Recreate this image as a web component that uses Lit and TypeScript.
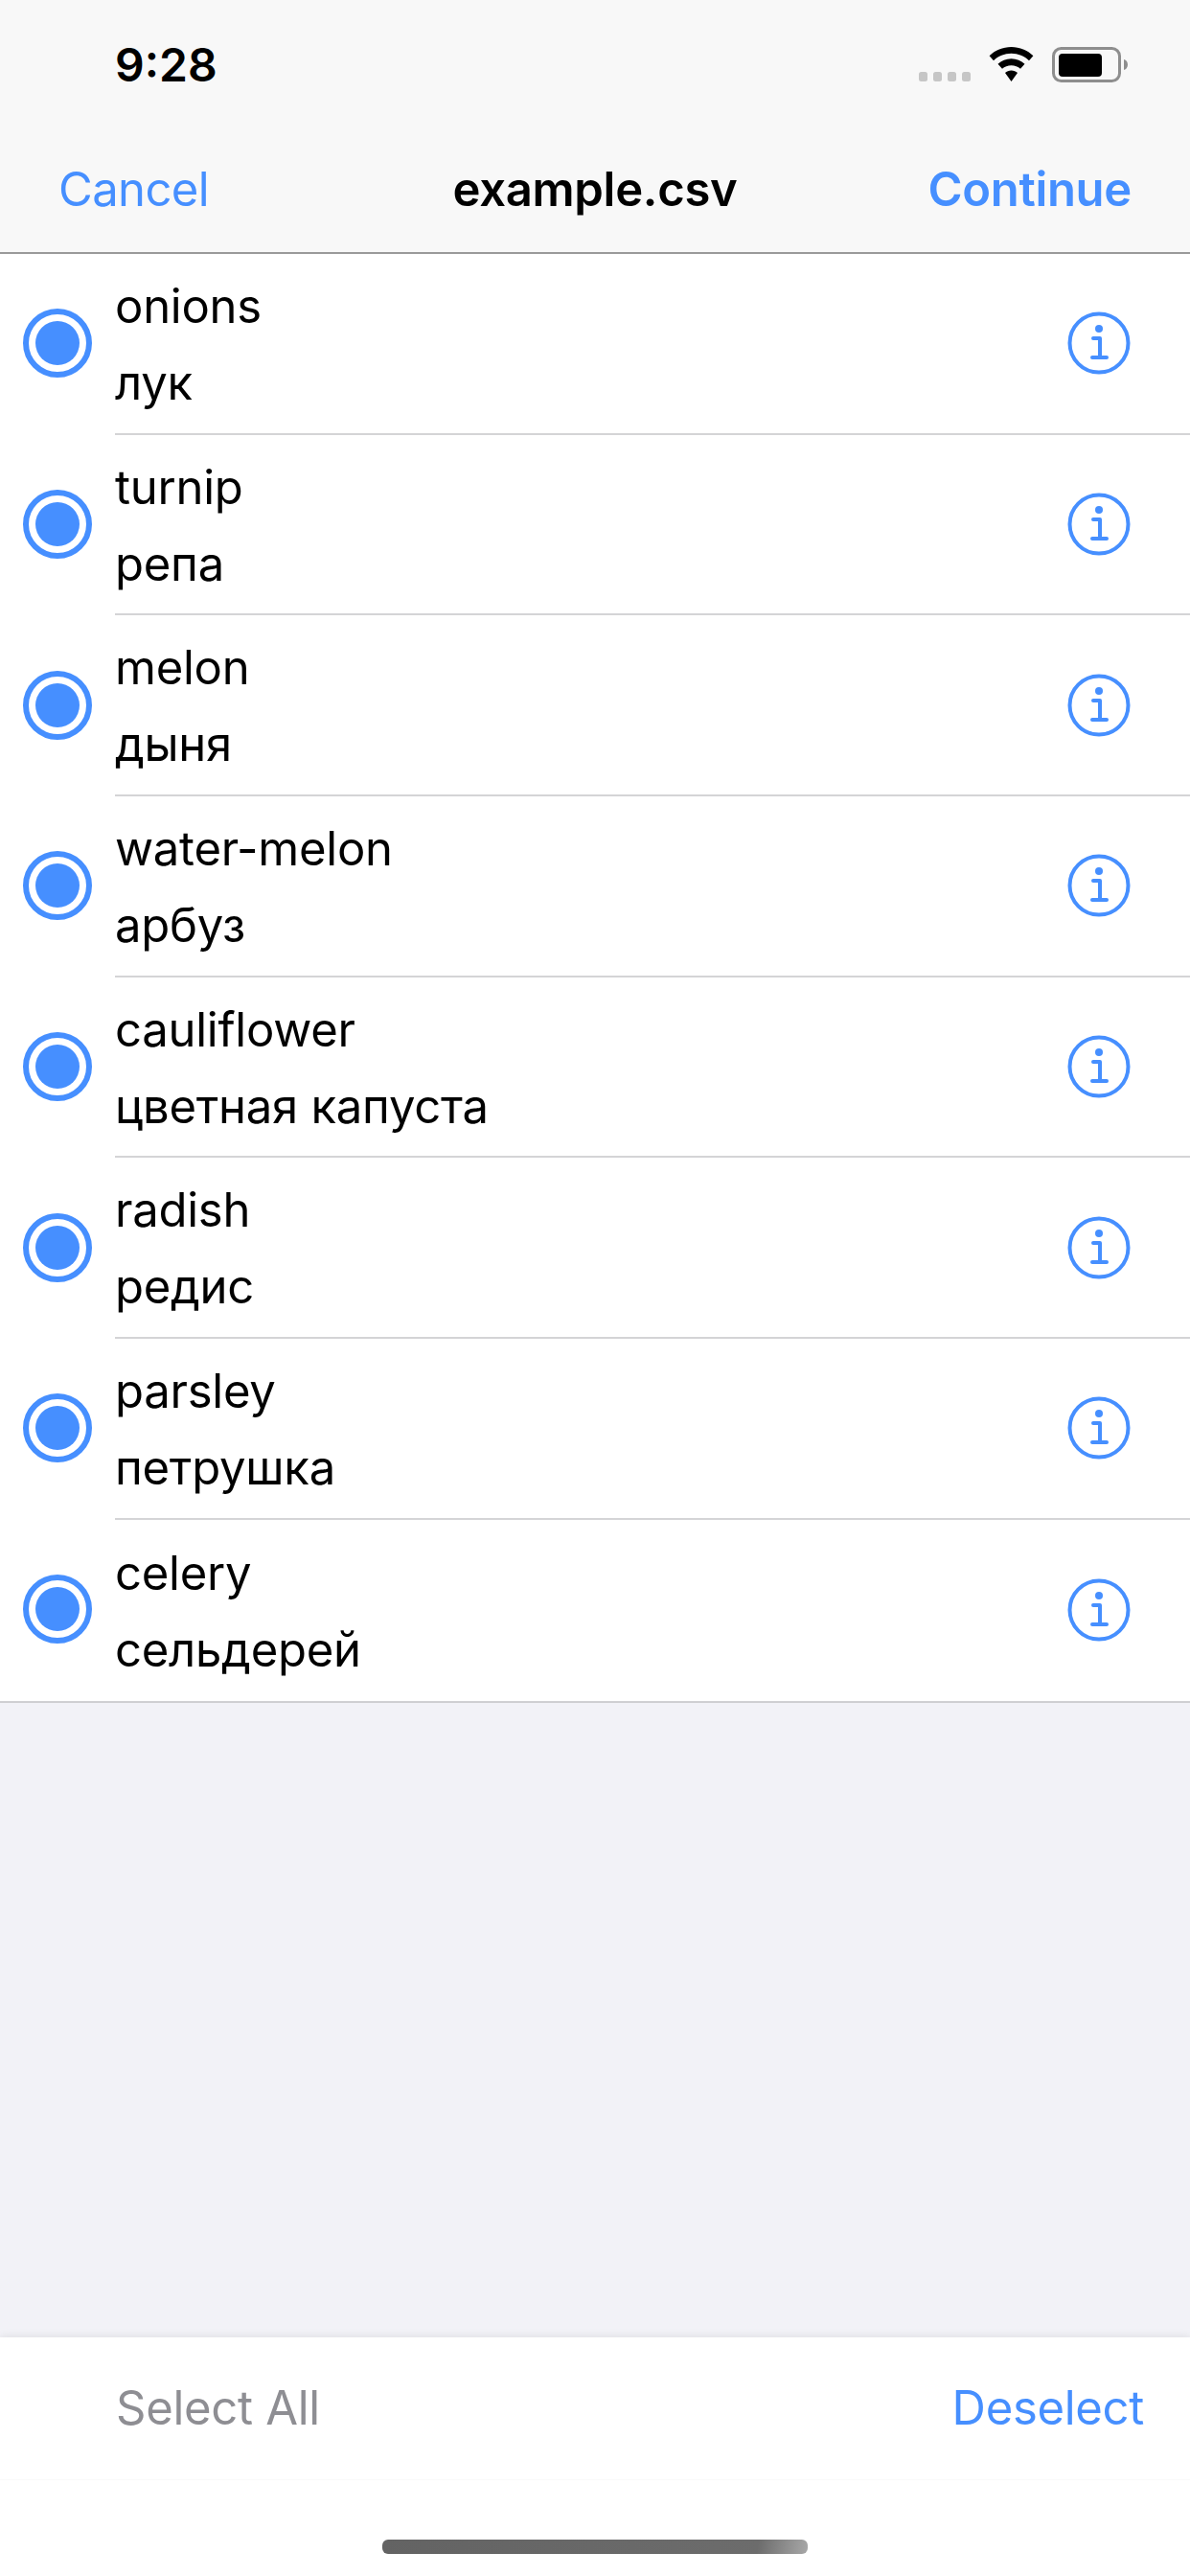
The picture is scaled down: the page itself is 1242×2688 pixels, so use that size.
import { LitElement, html, css, svg } from "lit";
import { customElement } from "lit/decorators.js";

const ITEMS: [string, string][] = [
  ["onions", "лук"],
  ["turnip", "репа"],
  ["melon", "дыня"],
  ["water-melon", "арбуз"],
  ["cauliflower", "цветная капуста"],
  ["radish", "редис"],
  ["parsley", "петрушка"],
  ["celery", "сельдерей"],
];

const wifi = svg`<svg class="wifi" width="47" height="36" viewBox="0 0 47 36">
  <path d="M23.5 0C14.6 0 6.6 3.5.6 9.2l4.4 5C9.8 9.6 16.3 6.8 23.5 6.8s13.7 2.8 18.5 7.4l4.4-5C40.400 3.500 32.400 0 23.500 0z" fill="#000"/>
  <path d="M23.500 12.200c-5.400 0-10.300 2.100-14 5.500l4.500 5.100c2.500-2.200 5.800-3.600 9.500-3.600s7 1.400 9.500 3.600l4.500-5.100c-3.700-3.400-8.600-5.500-14-5.500z" fill="#000"/>
  <path d="M23.500 24.600c-2.500 0-4.800.9-6.500 2.400L23.500 36 30 27c-1.700-1.500-4-2.400-6.500-2.400z" fill="#000"/>
</svg>`;

const battery = svg`<svg width="80" height="38" viewBox="0 0 80 38">
  <rect x="1.500" y="1.500" width="69" height="34" rx="8" fill="none" stroke="#8e8e8e" stroke-width="3"/>
  <rect x="7" y="7" width="45" height="24" rx="4" fill="#000"/>
  <path d="M75 13c2.600.8 4 3 4 5.500S77.600 23.200 75 24z" fill="#8e8e8e"/>
</svg>`;

const info = svg`<svg width="66" height="66" viewBox="0 0 66 66">
  <circle cx="33" cy="33" r="30.500" fill="none" stroke="#468fff" stroke-width="4"/>
  <circle cx="33" cy="18" r="4" fill="#468fff"/>
  <path d="M27 28h7v20M26 48h15" fill="none" stroke="#468fff" stroke-width="4" stroke-linecap="round" stroke-linejoin="round"/>
</svg>`;

@customElement("app-root")
export class AppRoot extends LitElement {
  static styles = css`
    :host {
      display: flex;
      flex-direction: column;
      width: 1242px;
      height: 2688px;
      overflow: hidden;
      background: #f2f2f7;
      font-family: Inter, "Noto Sans", sans-serif;
      color: #000;
    }
    .top {
      background: #f8f8f8;
      border-bottom: 2px solid #9a9a9a;
      height: 265px;
      box-sizing: border-box;
    }
    .status {
      height: 133px;
      display: flex;
      align-items: flex-start;
      padding: 0 64px 0 120px;
      box-sizing: border-box;
      justify-content: space-between;
    }
    .time {
      font-size: 48px;
      font-weight: 600;
      line-height: 58px;
      margin-top: 39px;
    }
    .indicators {
      display: flex;
      align-items: flex-start;
      margin-top: 49px;
    }
    .dots {
      display: flex;
      gap: 6px;
      margin: 26px 19px 0 0;
    }
    .dots i {
      width: 9px;
      height: 10px;
      border-radius: 2.500px;
      background: #c6c6c6;
    }
    .wifi { margin-right: 19px; }
    .nav {
      height: 130px;
      display: grid;
      grid-template-columns: 1fr auto 1fr;
      align-items: center;
      padding: 0 61px;
      font-size: 49px;
      line-height: 60px;
      letter-spacing: -0.3px;
    }
    .cancel { color: #468fff; justify-self: start; font-weight: 400; letter-spacing: -0.6px; }
    .title { font-weight: 600; }
    .continue { color: #468fff; justify-self: end; font-weight: 600; }
    .list {
      background: #fff;
      border-bottom: 2px solid #cfcfd2;
    }
    .row {
      display: flex;
      height: 188.700px;
      box-sizing: border-box;
    }
    .radio-col {
      width: 120px;
      padding: 0 0 2px 24px;
      box-sizing: border-box;
      display: flex;
      align-items: center;
      flex: none;
    }
    .radio {
      width: 72px;
      height: 72px;
      border: 6px solid #468fff;
      border-radius: 50%;
      box-sizing: border-box;
      display: flex;
      align-items: center;
      justify-content: center;
    }
    .radio i {
      width: 46px;
      height: 46px;
      border-radius: 50%;
      background: #468fff;
    }
    .body {
      flex: 1;
      display: flex;
      align-items: center;
      justify-content: space-between;
      padding-right: 62px;
      border-bottom: 2px solid #d4d4d6;
    }
    .row:last-child .body { border-bottom: none; }
    .text {
      display: flex;
      flex-direction: column;
      gap: 19px;
      margin-top: 2px;
      font-size: 49px;
      line-height: 61px;
      letter-spacing: -0.25px;
    }
    .fill { flex: 1; }
    .toolbar {
      height: 249px;
      background: #fff;
      box-shadow: 0 -2px 8px rgba(0, 0, 0, 0.07);
      display: flex;
      flex-direction: column;
    }
    .tools {
      height: 148px;
      display: flex;
      align-items: center;
      justify-content: space-between;
      padding: 0 48px 0 121px;
      font-size: 49px;
      line-height: 60px;
      letter-spacing: -0.3px;
      border-bottom: 1px solid #fafafa;
    }
    .select { color: #8e8e93; }
    .deselect { color: #468fff; }
    .home-wrap {
      flex: 1;
      display: flex;
      justify-content: center;
      padding-top: 62px;
    }
    .home {
      width: 444px;
      height: 15px;
      border-radius: 6px;
      background: linear-gradient(100deg, #636363 0%, #6c6c6c 88%, #a8a8a8 100%);
    }
  `;

  render() {
    return html`
      <div class="top">
        <div class="status">
          <div class="time">9:28</div>
          <div class="indicators">
            <div class="dots"><i></i><i></i><i></i><i></i></div>
            ${wifi}${battery}
          </div>
        </div>
        <div class="nav">
          <div class="cancel">Cancel</div>
          <div class="title">example.csv</div>
          <div class="continue">Continue</div>
        </div>
      </div>
      <div class="list">
        ${ITEMS.map(
          ([en, ru]) => html`
            <div class="row">
              <div class="radio-col"><div class="radio"><i></i></div></div>
              <div class="body">
                <div class="text"><span>${en}</span><span>${ru}</span></div>
                ${info}
              </div>
            </div>
          `
        )}
      </div>
      <div class="fill"></div>
      <div class="toolbar">
        <div class="tools">
          <span class="select">Select All</span>
          <span class="deselect">Deselect</span>
        </div>
        <div class="home-wrap"><div class="home"></div></div>
      </div>
    `;
  }
}
